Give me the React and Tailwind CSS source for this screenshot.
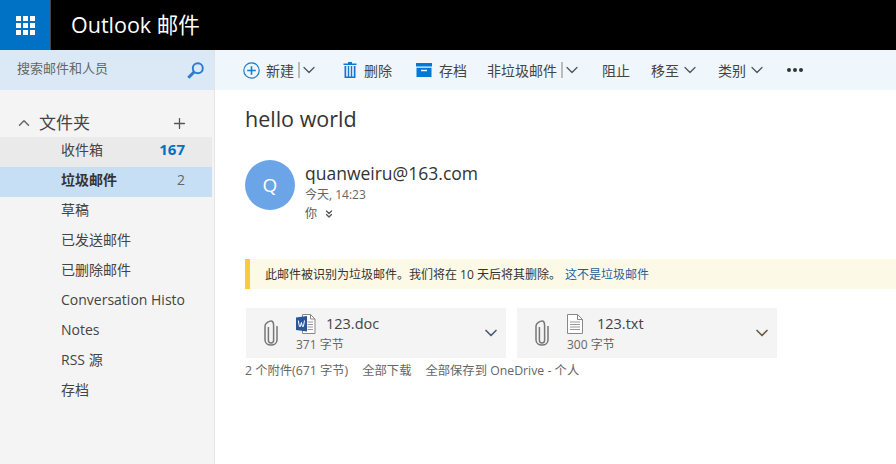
import React from 'react';
import { ChevronDown, ChevronUp, Plus, ChevronsDown } from 'lucide-react';

const FONT = 'font-["Open_Sans","Noto_Sans_CJK_SC",sans-serif]';

const folders = [
    { name: '收件箱', count: '167', bg: 'bg-[#eaeaea]', countCls: 'text-[#0072c6] font-bold text-[15px]' },
    { name: '垃圾邮件', count: '2', bg: 'bg-[#c7dff4]', bold: true, countCls: 'text-[#666] text-[14px]' },
    { name: '草稿' },
    { name: '已发送邮件' },
    { name: '已删除邮件' },
    { name: 'Conversation History' },
    { name: 'Notes' },
    { name: 'RSS 源' },
    { name: '存档' },
];

const Waffle = () => (
    <div className="grid grid-cols-3 gap-[2px] w-[19px]">
        {[...Array(9)].map((_, i) => (
            <div key={i} className="w-[5px] h-[5px] bg-white" />
        ))}
    </div>
);

const Caret = ({ className = '' }) => (
    <ChevronDown size={20} strokeWidth={1.5} className={`text-[#555] ${className}`} />
);

const Divider = () => <span className="w-[2px] h-[16px] bg-[#bbb] ml-[4px]" />;

const SearchIcon = () => (
    <svg width="17" height="17" viewBox="0 0 17 17" fill="none" stroke="#2b7cd3">
        <circle cx="10.800" cy="6.200" r="5" strokeWidth="2" />
        <path d="M7.300 9.700L1.300 15.700" strokeWidth="3" />
    </svg>
);

const NewIcon = () => (
    <svg width="17" height="17" viewBox="0 0 17 17" fill="none" stroke="#1c7cd0" strokeWidth="1.2">
        <circle cx="8.500" cy="8.500" r="7.700" />
        <path d="M8.500 4.200v8.600M4.200 8.500h8.600" strokeWidth="1.600" />
    </svg>
);

const TrashIcon = () => (
    <svg width="14" height="16" viewBox="0 0 14 16" fill="#0f78d4">
        <path d="M5 0h4v1.500h4.500V3H.5V1.500H5z" />
        <path d="M1.500 4H3.200v10.400h1.600V4h1.400v10.400h1.600V4h1.400v10.400h1.600V4h1.700v12h-11z" />
    </svg>
);

const ArchiveIcon = () => (
    <svg width="16" height="14" viewBox="0 0 16 14" fill="#0078d7">
        <path d="M0 0h16v3.500H0z" />
        <path d="M.5 4.800h15V14H.5zM5 6.800v1.400h6V6.800z" fillRule="evenodd" />
    </svg>
);

const Clip = () => (
    <svg width="14" height="26" viewBox="0 0 14 26" fill="none" stroke="#777" strokeWidth="1.500">
        <path d="M4.400 7v13.200c0 1.600 1.100 2.700 2.600 2.700s2.600-1.100 2.600-2.700V5.600C9.600 3 8.600 1 7 1S1 3 1 6v14c0 3 2.600 5 6 5s6-2 6-5V6" />
    </svg>
);

const WordIcon = () => (
    <svg width="20" height="20" viewBox="0 0 20 20">
        <path d="M6.500.5h8l4.500 4.500v14.500h-12.500z" fill="#fff" stroke="#888" />
        <path d="M14.500.5v4.500h4.500" fill="none" stroke="#888" />
        <path d="M11.500 8h5.500M11.500 10.500h5.500M11.500 13h5.500M11.500 15.500h5.500" stroke="#999" />
        <path d="M0 3.500l11-1.500v15.500l-11-1.500z" fill="#2b579a" />
        <path d="M2.300 6.500l1.100 6h1l1-4 1 4h1l1.100-6" fill="none" stroke="#fff" strokeWidth="1" />
    </svg>
);

const TxtIcon = () => (
    <svg width="16" height="20" viewBox="0 0 16 20" fill="none" stroke="#888">
        <path d="M.5.5h10l5 5v14h-15z" fill="#fff" />
        <path d="M10.500.5v5h5" />
        <path d="M3 8h10M3 10.500h10M3 13h10M3 15.500h10" stroke="#999" />
    </svg>
);

const Attachment = ({ icon, name, size, caret }) => (
    <div className="flex items-center h-[50px] w-[260px] bg-[#f4f4f4]">
        <div className="ml-[18px] mr-[18px] flex"><Clip /></div>
        <div className="flex-1 min-w-0 pb-[2px]">
            <div className="flex items-center h-[26px]">
                <div className="w-[30px]">{icon}</div>
                <span className="text-[14.500px] text-[#444] leading-none">{name}</span>
            </div>
            <div className="text-[12px] leading-[16px] text-[#666]">{size}</div>
        </div>
        <ChevronDown size={20} strokeWidth={2} className={`mr-[5px] ${caret}`} />
    </div>
);

export default function App() {
    return (
        <div className={`w-[896px] h-[464px] overflow-hidden bg-white flex flex-col ${FONT}`}>
            {/* top bar */}
            <header className="h-[50px] shrink-0 bg-black flex items-center">
                <div className="w-[51px] h-full bg-[#0072c6] border-r border-[#444] flex items-center justify-center">
                    <Waffle />
                </div>
                <span className="ml-[20px] text-[21.500px] text-white leading-none">Outlook 邮件</span>
            </header>

            <div className="flex flex-1 min-h-0">
                {/* folder pane */}
                <aside className="w-[215px] shrink-0 bg-[#f4f4f4] border-r border-[#e4e4e4]">
                    <div className="h-[40px] bg-[#dbe9f7] flex items-center justify-between pl-[17px] pr-[10px] w-[214px]">
                        <span className="text-[13px] text-[#666] pb-[2px]">搜索邮件和人员</span>
                        <SearchIcon />
                    </div>
                    <div className="h-[47px] flex items-center pl-[15px] pr-[26px] pt-[19px]">
                        <ChevronUp size={18} strokeWidth={2} className="text-[#666]" />
                        <span className="ml-[6px] text-[17px] text-[#444] flex-1">文件夹</span>
                        <Plus size={17} strokeWidth={1.800} className="text-[#555]" />
                    </div>
                    <ul className="w-[212px]">
                        {folders.map((f) => (
                            <li key={f.name} className={`h-[30px] flex items-center pl-[61px] pr-[27px] pb-[5px] ${f.bg || ''}`}>
                                <span className={`flex-1 min-w-0 overflow-hidden whitespace-nowrap text-[14px] ${f.bold ? 'font-bold text-[#333]' : 'text-[#444]'}`}>
                                    {f.name}
                                </span>
                                {f.count && <span className={f.countCls}>{f.count}</span>}
                            </li>
                        ))}
                    </ul>
                </aside>

                {/* reading pane */}
                <main className="flex-1 min-w-0">
                    <div className="h-[40px] bg-[#eff6fc] flex items-center text-[14px] text-[#444] pl-[28px] whitespace-nowrap">
                        <NewIcon />
                        <span className="ml-[6px]">新建</span>
                        <Divider />
                        <Caret className="-ml-[1px]" />
                        <span className="ml-[24px] flex"><TrashIcon /></span>
                        <span className="ml-[7px]">删除</span>
                        <span className="ml-[24px] flex"><ArchiveIcon /></span>
                        <span className="ml-[7px]">存档</span>
                        <span className="ml-[20px]">非垃圾邮件</span>
                        <Divider />
                        <Caret className="-ml-[1px]" />
                        <span className="ml-[20px]">阻止</span>
                        <span className="ml-[21px]">移至</span>
                        <Caret className="ml-[1px]" />
                        <span className="ml-[18px]">类别</span>
                        <Caret className="ml-[1px]" />
                        <span className="ml-[20px] flex gap-[2px]">
                            <i className="w-[4px] h-[4px] rounded-full bg-[#333]" />
                            <i className="w-[4px] h-[4px] rounded-full bg-[#333]" />
                            <i className="w-[4px] h-[4px] rounded-full bg-[#333]" />
                        </span>
                    </div>

                    <div className="pl-[30px]">
                        <h1 className="mt-[13px] text-[21.500px] leading-[32px] text-[#333]">hello world</h1>

                        <div className="mt-[25px] flex">
                            <div className="w-[50px] h-[50px] rounded-full bg-[#6ba5e7] flex items-center justify-center text-white text-[19px]">Q</div>
                            <div className="ml-[10px]">
                                <div className="text-[17.500px] leading-[24px] text-[#333] mt-[1px]">quanweiru@163.com</div>
                                <div className="text-[12px] leading-[16px] text-[#666] mt-[2px]">今天, 14:23</div>
                                <div className="flex items-center text-[12px] leading-[20px] text-[#555] mt-[1px]">
                                    你
                                    <ChevronsDown size={12} strokeWidth={2.500} className="ml-[6px] text-[#555]" />
                                </div>
                            </div>
                        </div>

                        <div className="mt-[35px] h-[30px] bg-[#fdf9e7] border-l-[5px] border-[#ffc83d] flex items-center pl-[15px] pt-[1px] text-[12px] text-[#333]">
                            此邮件被识别为垃圾邮件。我们将在 10 天后将其删除。
                            <span className="ml-[4px] text-[#1f5f9e]">这不是垃圾邮件</span>
                        </div>

                        <div className="mt-[19px] flex gap-[11px] pl-[1px]">
                            <Attachment icon={<WordIcon />} name="123.doc" size="371 字节" caret="text-[#4a5a70]" />
                            <Attachment icon={<TxtIcon />} name="123.txt" size="300 字节" caret="text-[#6b5a40]" />
                        </div>

                        <div className="mt-[4px] flex text-[12.300px] leading-[17px] text-[#666] whitespace-nowrap">
                            <span>2 个附件(671 字节)</span>
                            <span className="ml-[14px]">全部下载</span>
                            <span className="ml-[14px]">全部保存到 OneDrive - 个人</span>
                        </div>
                    </div>
                </main>
            </div>
        </div>
    );
}
